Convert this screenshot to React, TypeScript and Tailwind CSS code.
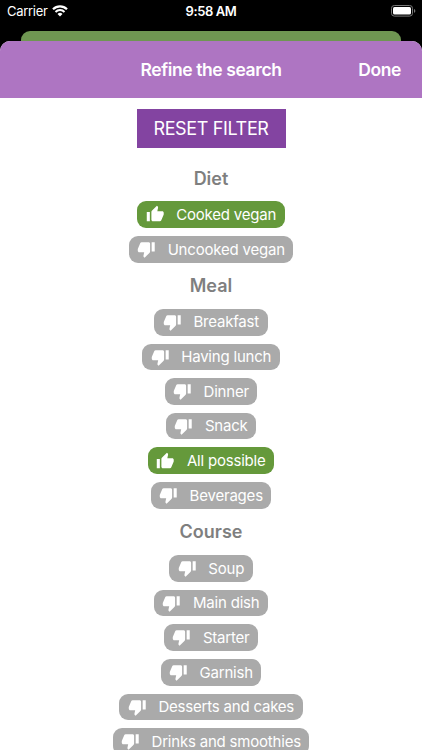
import React from 'react';
import { MdThumbDown, MdThumbUp } from 'react-icons/md';

interface FilterOption {
    label: string;
    active?: boolean;
}

interface FilterGroup {
    title: string;
    options: FilterOption[];
}

const groups: FilterGroup[] = [
    {
        title: 'Diet',
        options: [{ label: 'Cooked vegan', active: true }, { label: 'Uncooked vegan' }],
    },
    {
        title: 'Meal',
        options: [
            { label: 'Breakfast' },
            { label: 'Having lunch' },
            { label: 'Dinner' },
            { label: 'Snack' },
            { label: 'All possible', active: true },
            { label: 'Beverages' },
        ],
    },
    {
        title: 'Course',
        options: [
            { label: 'Soup' },
            { label: 'Main dish' },
            { label: 'Starter' },
            { label: 'Garnish' },
            { label: 'Desserts and cakes' },
            { label: 'Drinks and smoothies' },
        ],
    },
];

const WifiIcon: React.FC = () => (
    <svg width="16" height="12" viewBox="0 0 16 12" fill="none">
        <path d="M1 4.3a9.9 9.9 0 0 1 14 0" stroke="white" strokeWidth="2.2" />
        <path d="M3.5 7a6.3 6.3 0 0 1 9 0" stroke="white" strokeWidth="2" />
        <path d="M8 11.6 5.5 9.1a3.5 3.5 0 0 1 5 0z" fill="white" />
    </svg>
);

const BatteryIcon: React.FC = () => (
    <svg width="25" height="12" viewBox="0 0 25 12" fill="none">
        <rect x="0.5" y="0.5" width="21" height="10.6" rx="2.8" stroke="#777777" />
        <rect x="2" y="2" width="18" height="7.6" rx="1.5" fill="white" />
        <path d="M23 4v3.8c.8-.3 1.3-1 1.3-1.9S23.8 4.3 23 4z" fill="#777777" />
    </svg>
);

const StatusBar: React.FC = () => (
    <div className="grid h-[31px] grid-cols-3 items-start pt-[3px] text-[13px] leading-4 text-white">
        <div className="flex items-center gap-[4px] pl-[7px]">
            <span className="tracking-[-0.3px]">Carrier</span>
            <WifiIcon />
        </div>
        <span className="text-center font-semibold tracking-[-0.4px]">9:58 AM</span>
        <div className="flex justify-end pt-[2px] pr-[6px]">
            <BatteryIcon />
        </div>
    </div>
);

const FilterPill: React.FC<FilterOption> = ({ label, active }) => (
    <button
        className={`flex h-[26.65px] items-center rounded-[9px] px-[8.5px] text-[15px] tracking-[-0.2px] text-white ${
            active ? 'bg-[#65993b]' : 'bg-[#aaaaaa]'
        }`}
    >
        {active ? <MdThumbUp size={18.5} /> : <MdThumbDown size={18.5} />}
        <span className="ml-[12px] pt-px whitespace-nowrap">{label}</span>
    </button>
);

const App: React.FC = () => (
    <div className="flex h-[750px] w-full flex-col overflow-hidden bg-black font-['Inter',sans-serif]">
        <StatusBar />
        <div className="mx-[21px] h-[10px] shrink-0 rounded-t-[9px] bg-[#6f9652]" />
        <div className="flex min-h-0 flex-1 flex-col overflow-hidden rounded-t-[10px] bg-white">
            <header className="grid h-[57px] shrink-0 grid-cols-[1fr_auto_1fr] items-center bg-[#ae75c2] pt-px text-[17.5px] font-semibold text-white">
                <h1 className="col-start-2 tracking-[-0.4px]">Refine the search</h1>
                <button className="justify-self-end pr-[21px] tracking-[-0.4px]">Done</button>
            </header>
            <main className="flex flex-col items-center pt-[11px]">
                <button className="h-[39px] w-[149px] shrink-0 bg-[#8344a1] text-[18px] tracking-[-0.35px] text-white">
                    RESET FILTER
                </button>
                <div className="mt-[7px] flex flex-col items-center">
                    {groups.map(group => (
                        <section key={group.title} className="flex flex-col items-center">
                            <h2 className="flex h-[46.3px] items-center text-[18px] font-semibold text-[#7f7f7f]">
                                {group.title}
                            </h2>
                            <div className="flex flex-col items-center gap-2">
                                {group.options.map(option => (
                                    <FilterPill key={option.label} {...option} />
                                ))}
                            </div>
                        </section>
                    ))}
                </div>
            </main>
        </div>
    </div>
);

export default App;
